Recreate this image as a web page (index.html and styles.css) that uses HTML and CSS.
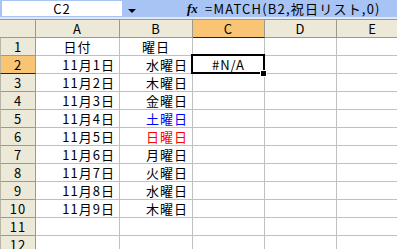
FILE: index.html
```html
<!DOCTYPE html>
<html lang="ja">
<head>
    <meta charset="UTF-8">
    <title>Sheet</title>
    <link rel="stylesheet" href="styles.css">
</head>
<body>
    <div class="formula-bar">
        <div class="name-box">C2</div>
        <div class="name-drop"><span class="arrow"></span></div>
        <div class="fx">fx</div>
        <div class="formula">=MATCH(B2,祝日リスト,0)</div>
    </div>
    <div class="strip"></div>

    <div class="sheet">
        <div class="hd corner"></div>
        <div class="hd">A</div>
        <div class="hd">B</div>
        <div class="hd sel-col">C</div>
        <div class="hd">D</div>
        <div class="hd">E</div>

        <div class="rh">1</div>
        <div class="c center">日付</div>
        <div class="c center">曜日</div>
        <div class="c"></div><div class="c"></div><div class="c"></div>

        <div class="rh sel-row">2</div>
        <div class="c right">11月1日</div>
        <div class="c right">水曜日</div>
        <div class="c center active">#N/A<span class="handle"></span></div>
        <div class="c"></div><div class="c"></div>

        <div class="rh">3</div>
        <div class="c right">11月2日</div>
        <div class="c right">木曜日</div>
        <div class="c"></div><div class="c"></div><div class="c"></div>

        <div class="rh">4</div>
        <div class="c right">11月3日</div>
        <div class="c right">金曜日</div>
        <div class="c"></div><div class="c"></div><div class="c"></div>

        <div class="rh">5</div>
        <div class="c right">11月4日</div>
        <div class="c right blue">土曜日</div>
        <div class="c"></div><div class="c"></div><div class="c"></div>

        <div class="rh">6</div>
        <div class="c right">11月5日</div>
        <div class="c right red">日曜日</div>
        <div class="c"></div><div class="c"></div><div class="c"></div>

        <div class="rh">7</div>
        <div class="c right">11月6日</div>
        <div class="c right">月曜日</div>
        <div class="c"></div><div class="c"></div><div class="c"></div>

        <div class="rh">8</div>
        <div class="c right">11月7日</div>
        <div class="c right">火曜日</div>
        <div class="c"></div><div class="c"></div><div class="c"></div>

        <div class="rh">9</div>
        <div class="c right">11月8日</div>
        <div class="c right">水曜日</div>
        <div class="c"></div><div class="c"></div><div class="c"></div>

        <div class="rh">10</div>
        <div class="c right">11月9日</div>
        <div class="c right">木曜日</div>
        <div class="c"></div><div class="c"></div><div class="c"></div>

        <div class="rh">11</div>
        <div class="c"></div><div class="c"></div><div class="c"></div><div class="c"></div><div class="c"></div>

        <div class="rh">12</div>
        <div class="c"></div><div class="c"></div><div class="c"></div><div class="c"></div><div class="c"></div>
    </div>
</body>
</html>
```

FILE: styles.css
```css
html, body {
    margin: 0;
    padding: 0;
    overflow: hidden;
}
body {
    width: 397px;
    height: 249px;
    background: #ffffff;
    font-family: "Noto Sans CJK JP", "DejaVu Sans", sans-serif;
    font-size: 13px;
    color: #000000;
}
.formula-bar {
    display: flex;
    height: 17px;
    background-color: #a8c4f4;
    box-sizing: border-box;
    padding: 1px 0 1px 2px;
}
.name-box {
    width: 120px;
    background-color: #ffffff;
    text-align: center;
    line-height: 15px;
    letter-spacing: 1px;
}
.name-drop {
    width: 63px;
    position: relative;
}
.arrow {
    position: absolute;
    left: 6px;
    top: 8px;
    border-left: 4px solid transparent;
    border-right: 4px solid transparent;
    border-top: 4px solid #000000;
}
.fx {
    width: 20px;
    font-family: "Liberation Serif", serif;
    font-style: italic;
    font-weight: bold;
    font-size: 13px;
    line-height: 15px;
    padding-left: 2px;
    box-sizing: border-box;
}
.formula {
    line-height: 15px;
    white-space: nowrap;
    letter-spacing: 1.2px;
}
.strip {
    height: 2px;
    background-color: #e2e8f2;
}
.sheet {
    display: grid;
    grid-template-columns: 36px 84px 73px 72px 72px 72px;
    grid-auto-rows: 18px;
    border-top: 1px solid #9c9a8a;
}
.sheet > div {
    box-sizing: border-box;
    line-height: 17px;
    white-space: nowrap;
}
.hd, .rh {
    background-color: #ece9d8;
    border-right: 1px solid #9c9a8a;
    border-bottom: 1px solid #9c9a8a;
    text-align: center;
    letter-spacing: 1px;
}
.rh {
    border-left: 1px solid #b8b5a6;
}
.sel-col {
    background-color: #f9c574;
    border-bottom: 1px solid #0a246a;
}
.sel-row {
    background-color: #f9c574;
    border-bottom: 1px solid #0a246a;
}
.c {
    border-right: 1px solid #c0c0c0;
    border-bottom: 1px solid #c0c0c0;
    padding: 0 4px;
    letter-spacing: 1px;
}
.right { text-align: right; }
.center { text-align: center; }
.blue { color: #0000ff; }
.red { color: #ff0000; }
.active {
    position: relative;
}
.active::before {
    content: "";
    position: absolute;
    left: -2px;
    top: -2px;
    right: -1px;
    bottom: -1px;
    border: 2px solid #000000;
}
.handle {
    position: absolute;
    right: -3px;
    bottom: -4px;
    width: 5px;
    height: 5px;
    background-color: #000000;
    border: 1px solid #ffffff;
}
```
